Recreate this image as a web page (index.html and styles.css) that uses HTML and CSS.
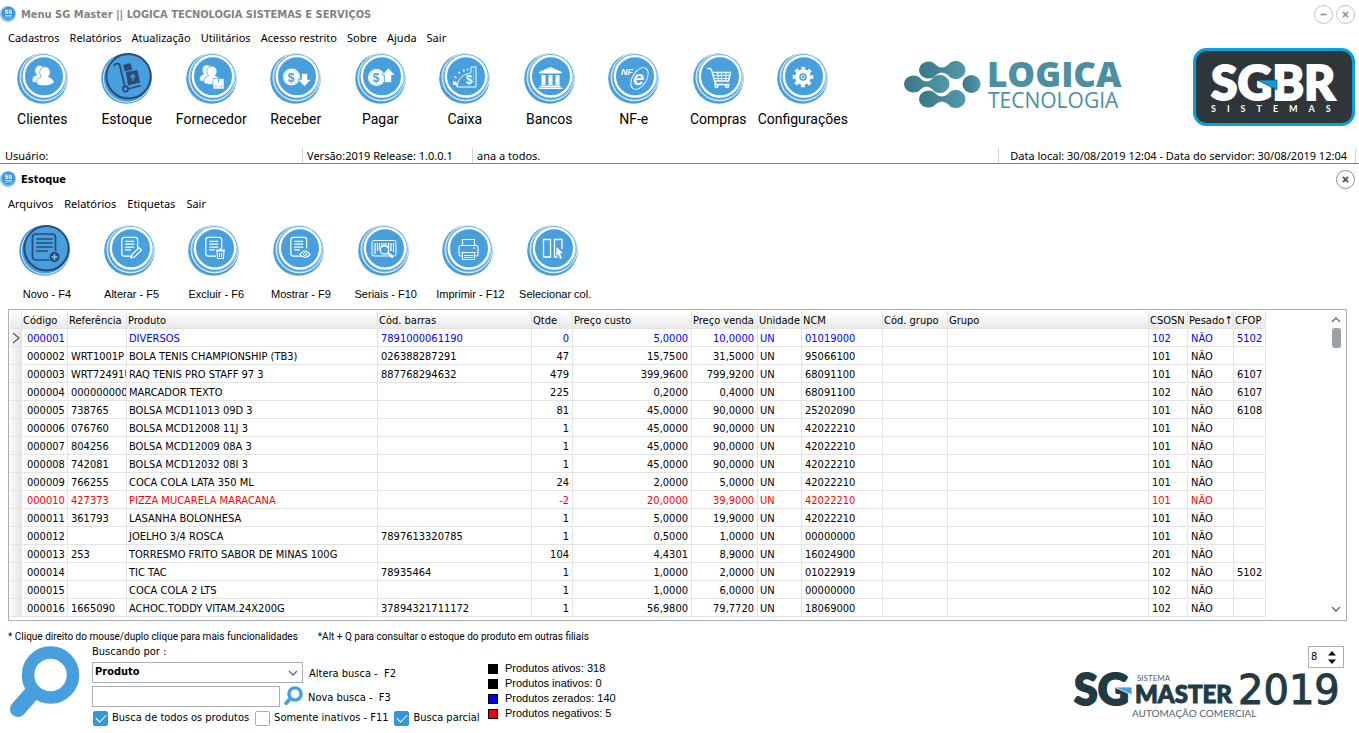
FILE: index.html
```html
<!DOCTYPE html>
<html lang="pt-BR">
<head>
<meta charset="utf-8">
<title>Menu SG Master</title>
<link rel="stylesheet" href="styles.css">
</head>
<body>
<svg class="defs" aria-hidden="true">
  <symbol id="disc" viewBox="0 0 51 51">
    <circle cx="25.5" cy="25.5" r="25.3" fill="#47a0dd"/>
    <circle cx="26.6" cy="24.2" r="23.6" fill="none" stroke="#fff" stroke-width=".9"/>
    <circle cx="26.3" cy="24.6" r="22.4" fill="none" stroke="#fff" stroke-width=".5"/>
    <circle cx="27" cy="23.3" r="20.2" fill="none" stroke="#fff" stroke-width="2.4"/>
  </symbol>
  <symbol id="disc-on" viewBox="0 0 51 51">
    <circle cx="25.5" cy="25.5" r="25.3" fill="#47a0dd"/>
    <circle cx="26" cy="25.5" r="23.6" fill="none" stroke="#fff" stroke-width=".8"/>
    <circle cx="27.5" cy="23.3" r="22.2" fill="#47a0dd" stroke="#2b4b77" stroke-width="2"/>
  </symbol>
  <symbol id="app" viewBox="0 0 16 16">
    <circle cx="8" cy="8" r="8" fill="#8cc6ee"/><circle cx="8.4" cy="7.4" r="6.6" fill="#3b97dc"/>
    <path d="M5 9.5h7M5 11h7" stroke="#a8d3f2"/><path d="M7.600 4H5.500v1.700h2v1.700H5.200M11.500 4.200H9.300v3h2.200V5.800h-1" fill="none" stroke="#fff"/>
  </symbol>
  <symbol id="people" viewBox="0 0 24 22">
    <g fill="#fff" stroke="#47a0dd" stroke-width=".8">
      <path d="M1 15.500c0-3.500 2-4.500 4.500-5.500a5 5.500 0 1 1 6.500 0l3 7.500H3q-2 0-2-2z"/>
      <path d="M5.500 19c0-4.500 2-6 5-7.300a5.300 5.800 0 1 1 7 0c3 1.300 5.500 2.800 5.500 6-4 3.800-13.500 4-17.500 1.300z"/>
    </g>
  </symbol>
  <symbol id="doc" viewBox="0 0 24 24">
    <path d="M15 21H6.500Q4 21 4 18.500V4Q4 1.500 6.500 1.500H18Q20.500 1.500 20.500 4V13M7.500 5.500h9.500M7.500 8.500h9.500M7.500 11.500h9.500M7.500 14.500h6"/>
  </symbol>
</svg>

<section class="window main-window">
  <header class="titlebar muted">
    <svg class="app-icon"><use href="#app"/></svg>
    <h1>Menu SG Master || LOGICA TECNOLOGIA SISTEMAS E SERVIÇOS</h1>
    <button class="round" aria-label="Minimizar"><svg viewBox="0 0 20 20"><path d="M6.500 10h7"/></svg></button>
    <button class="round" aria-label="Fechar"><svg viewBox="0 0 20 20"><path d="M7 7l6 6M13 7l-6 6"/></svg></button>
  </header>
  <nav class="menu">
    <a href="#">Cadastros</a><a href="#">Relatórios</a><a href="#">Atualização</a><a href="#">Utilitários</a><a href="#">Acesso restrito</a><a href="#">Sobre</a><a href="#">Ajuda</a><a href="#">Sair</a>
  </nav>
  <div class="top">
    <div class="tools tools-main">
      <button><svg class="ico" viewBox="0 0 51 51"><use href="#disc"/><use href="#people" x="14" y="11.500" width="24" height="23"/></svg><span>Clientes</span></button>
      <button><svg class="ico" viewBox="0 0 51 51"><use href="#disc-on"/><g fill="none" stroke="#2b4b77" stroke-width="1.700" stroke-linecap="round"><path d="M13 12.500c1-2 4.500-2.500 5.500-1l5.200 21.500M27 36l12-3.300"/><circle cx="24.500" cy="36" r="2.600"/></g><path d="M22 12l7.500-2 1.800 6.500-7.500 2zM25 19l11.500-2 2.500 12.500-12 3z" fill="#2b4b77"/><path d="M31.800 28v-6m-2.500 2.500l2.500-2.800 2.500 2.800" fill="none" stroke="#47a0dd" stroke-width="1.300"/></svg><span>Estoque</span></button>
      <button><svg class="ico" viewBox="0 0 51 51"><use href="#disc"/><use href="#people" x="12.500" y="11" width="23" height="22"/><path d="M27 25.500h11V36H27z" fill="#fff" stroke="#47a0dd" stroke-width=".6"/><path d="M32.500 26v3.500M30 32.500v1.500M35 32.500v1.500" stroke="#47a0dd"/></svg><span>Fornecedor</span></button>
      <button><svg class="ico" viewBox="0 0 51 51"><use href="#disc"/><circle cx="21.500" cy="24" r="8.500" fill="#fff"/><circle cx="21.500" cy="24" r="7" fill="none" stroke="#b9dcf4" stroke-width=".7"/><text x="21" y="28.500" class="coin">$</text><path d="M31.500 20.500h6v6h3.500l-6.500 7-6.500-7h3.500z" fill="#fff" stroke="#47a0dd" stroke-width=".6"/></svg><span>Receber</span></button>
      <button><svg class="ico" viewBox="0 0 51 51"><use href="#disc"/><circle cx="21.500" cy="24.500" r="8.500" fill="#fff"/><circle cx="21.500" cy="24.500" r="7" fill="none" stroke="#b9dcf4" stroke-width=".7"/><text x="21" y="29" class="coin">$</text><path d="M29.500 29.500h7v-7.500h3.500l-6.500-7-6.500 7h2.500z" fill="#fff" stroke="#47a0dd" stroke-width=".6"/></svg><span>Pagar</span></button>
      <button><svg class="ico" viewBox="0 0 51 51"><use href="#disc"/><path d="M18 34h19V14h-5v5.500M18 34c.5-8 6-13 14-14M18 34v-3" fill="none" stroke="#fff"/><path d="M34.500 16v14" stroke="#fff" stroke-width=".6" stroke-dasharray="1 1"/><path d="M14 28l3.500 1v3H14z" fill="#fff"/><path d="M15.500 23.500l2 1.500M19.500 19l1.500 1.500M24.500 16.500l.7 2M28.500 15.500v2" stroke="#fff" stroke-width="1.500" fill="none"/><text x="30" y="30.500" class="coin white">$</text></svg><span>Caixa</span></button>
      <button><svg class="ico" viewBox="0 0 51 51"><use href="#disc"/><path d="M26.500 14l11.500 5v1.500H15V19zM17.500 22h4v10h-4zM24.500 22h4v10h-4zM31.500 22h4v10h-4zM16.500 32.500h20V34h-20zM14.500 34.500h24V36h-24z" fill="#fff"/></svg><span>Bancos</span></button>
      <button><svg class="ico" viewBox="0 0 51 51"><use href="#disc"/><text x="13" y="22" class="nf">NF</text><ellipse cx="31.500" cy="25.500" rx="7" ry="12" transform="rotate(32 31.500 25.500)" fill="none" stroke="#fff" stroke-width=".9"/><text x="25" y="32" class="nfe">e</text></svg><span>NF-e</span></button>
      <button><svg class="ico" viewBox="0 0 51 51"><use href="#disc"/><g fill="none" stroke="#fff" stroke-width="1.500"><path d="M14.500 15.500h3l1.500 3 3.500 13h13.500M20 19.500h17.500l-2 8.500H22.500" stroke-linecap="round"/><path d="M20.500 22.500h16M21.500 25.500h14M24.500 20l1 8M28.500 20v8M33 20l-.5 8" stroke-width="1.100"/><circle cx="23.500" cy="33" r="1.500"/><circle cx="34" cy="33" r="1.500"/></g></svg><span>Compras</span></button>
      <button><svg class="ico" viewBox="0 0 51 51"><use href="#disc"/><circle cx="26" cy="24" r="8.600" fill="none" stroke="#fff" stroke-width="3.500" stroke-dasharray="3.600 3.150" stroke-dashoffset="1.800"/><circle cx="26" cy="24" r="5.800" fill="none" stroke="#fff" stroke-width="4"/><circle cx="26" cy="24" r="1.800" fill="none" stroke="#fff"/></svg><span>Configurações</span></button>
    </div>
    <svg class="logo-logica" viewBox="0 0 220 54" role="img" aria-label="Logica Tecnologia">
      <defs><linearGradient id="teal"><stop offset="0" stop-color="#3d7686"/><stop offset="1" stop-color="#5099ab"/></linearGradient></defs>
      <g fill="url(#teal)">
        <path d="M16 11a9.500 9 0 0 1 17-5q5.500 5 12 0a9.500 9 0 1 1 0 10q-6.500-5-12 0a9.500 9 0 0 1-17-5z"/>
        <path d="M1 25a9.500 9 0 0 1 17-5q5.500 5 11 0a9.500 9 0 1 1 0 10q-5.500-5-11 0a9.500 9 0 0 1-17-5z"/>
        <path d="M16 40a9.500 9 0 0 1 17-5q5.500 5 12 0a9.500 9 0 1 1 0 10q-6.500-5-12 0a9.500 9 0 0 1-17-5z"/>
        <circle cx="68.500" cy="25" r="9"/>
      </g>
      <text x="84" y="28" class="lg1">LOGICA</text>
      <text x="85" y="49" class="lg2">TECNOLOGIA</text>
    </svg>
    <svg class="logo-sgbr" viewBox="0 0 162 78" role="img" aria-label="SGBR Sistemas">
      <rect x="1.500" y="1.500" width="159" height="75" rx="12" fill="#2e363a" stroke="#069fe2" stroke-width="3"/>
      <text x="18" y="52" class="sb1">SGBR</text>
      <path d="M64 32h20v10z" fill="#069fe2" stroke="#2e363a" stroke-width=".6"/>
      <text x="18" y="64" class="sb2">SISTEMAS</text>
    </svg>
  </div>
  <footer class="status">
    <span>Usuário:</span><span>Versão:2019 Release: 1.0.0.1</span><span>ana a todos.</span><span>Data local: 30/08/2019 12:04 - Data do servidor: 30/08/2019 12:04</span><span></span>
  </footer>
</section>

<section class="window stock">
  <header class="titlebar">
    <svg class="app-icon"><use href="#app"/></svg>
    <h2>Estoque</h2>
    <button class="round" aria-label="Fechar"><svg viewBox="0 0 20 20"><path d="M7 7l6 6M13 7l-6 6"/></svg></button>
  </header>
  <nav class="menu"><a href="#">Arquivos</a><a href="#">Relatórios</a><a href="#">Etiquetas</a><a href="#">Sair</a></nav>
  <div class="tools tools-stock">
    <button><svg class="ico" viewBox="0 0 51 51"><use href="#disc-on"/><g fill="none" stroke="#2b4b77" stroke-width="1.700" stroke-linecap="round"><path d="M31 35H17q-3.500 0-3.500-3.500V12Q13.500 9 17 9h16q3.500 0 3.500 3.500V26M18 14h15M18 18h15M18 22h15M18 26h10"/></g><circle cx="35.500" cy="32" r="5.500" fill="#2b4b77" stroke="#47a0dd"/><path d="M32.500 32h6M35.500 29v6" stroke="#8cc6ee" stroke-width="1.500"/></svg><span>Novo - F4</span></button>
    <button><svg class="ico" viewBox="0 0 51 51"><use href="#disc"/><use class="doc" href="#doc" x="14" y="11" width="23" height="23"/><path d="M27 33l1-3.500 7-7 2.500 2.500-7 7z" fill="#47a0dd" stroke="#fff" stroke-width="1.200"/></svg><span>Alterar - F5</span></button>
    <button><svg class="ico" viewBox="0 0 51 51"><use href="#disc"/><use class="doc" href="#doc" x="14" y="11" width="23" height="23"/><path d="M29 26h7l-.7 7.500h-5.600zM28 25h9M31 24h3M31.500 28v4M33.500 28v4" fill="#47a0dd" stroke="#fff" stroke-width="1.100"/></svg><span>Excluir - F6</span></button>
    <button><svg class="ico" viewBox="0 0 51 51"><use href="#disc"/><use class="doc" href="#doc" x="14" y="11" width="23" height="23"/><path d="M27 29.500q5-7 10 0-5 6-10 0z" fill="#47a0dd" stroke="#fff" stroke-width="1.200"/><circle cx="32" cy="29.300" r="1.600" fill="none" stroke="#fff"/></svg><span>Mostrar - F9</span></button>
    <button><svg class="ico" viewBox="0 0 51 51"><use href="#disc"/><rect x="14" y="15.500" width="24" height="15.500" rx="2" fill="none" stroke="#fff"/><path d="M17 18v11M19.500 18v8M21.500 18v7M24 18v4M26 18v3M28 18v3M30.500 18v5M33 18v8M35.500 18v9" stroke="#fff" stroke-width="1.200"/><circle cx="26.500" cy="25" r="4.200" fill="#47a0dd" stroke="#fff" stroke-width="1.300"/><path d="M30 28l5 4.500" stroke="#fff" stroke-width="2.400"/></svg><span>Seriais - F10</span></button>
    <button><svg class="ico" viewBox="0 0 51 51"><use href="#disc"/><g fill="none" stroke="#fff" stroke-width="1.100"><path d="M20.500 20v-5.500h12V20M20 31h-1.500q-1.500 0-1.500-1.500v-7q0-2 2-2h15q2 0 2 2v7q0 1.500-1.500 1.500H33M19 27.500h15M20.500 27.500v7h12v-7M22 30.500h9M22 32.500h9M31 23h2"/></g></svg><span>Imprimir - F12</span></button>
    <button><svg class="ico" viewBox="0 0 51 51"><use href="#disc"/><path d="M16.500 14.500h7v17.500h-7zM35 24v-9.500h-7.500v17.500h3" fill="none" stroke="#fff" stroke-width="1.300"/><path d="M29.500 22l6.500 6-3 .5 2 4.500-1.800.8-2-4.500-1.900 1.900z" fill="#fff"/></svg><span>Selecionar col.</span></button>
  </div>

  <div class="grid-box">
    <div class="grid-scroll">
    <table>
      <colgroup><col class="c-ind"><col class="c-cod"><col class="c-ref"><col class="c-prod"><col class="c-bar"><col class="c-qtd"><col class="c-cus"><col class="c-ven"><col class="c-uni"><col class="c-ncm"><col class="c-cg"><col class="c-gr"><col class="c-cso"><col class="c-pes"><col class="c-cfop"></colgroup>
      <thead><tr><th></th><th>Código</th><th>Referência</th><th>Produto</th><th>Cód. barras</th><th>Qtde</th><th>Preço custo</th><th>Preço venda</th><th>Unidade</th><th>NCM</th><th>Cód. grupo</th><th>Grupo</th><th>CSOSN</th><th>Pesado↑</th><th>CFOP</th></tr></thead>
      <tbody>
      <tr class="zero"><td><svg class="mark" viewBox="0 0 8 12"><path d="M1 1l6 5-6 5"/></svg></td><td>000001</td><td></td><td>DIVERSOS</td><td>7891000061190</td><td>0</td><td>5,0000</td><td>10,0000</td><td>UN</td><td>01019000</td><td></td><td></td><td>102</td><td>NÃO</td><td>5102</td></tr>
      <tr><td></td><td>000002</td><td>WRT1001P</td><td>BOLA TENIS CHAMPIONSHIP (TB3)</td><td>026388287291</td><td>47</td><td>15,7500</td><td>31,5000</td><td>UN</td><td>95066100</td><td></td><td></td><td>101</td><td>NÃO</td><td></td></tr>
      <tr><td></td><td>000003</td><td>WRT72491U</td><td>RAQ TENIS PRO STAFF 97 3</td><td>887768294632</td><td>479</td><td>399,9600</td><td>799,9200</td><td>UN</td><td>68091100</td><td></td><td></td><td>101</td><td>NÃO</td><td>6107</td></tr>
      <tr><td></td><td>000004</td><td>0000000000</td><td>MARCADOR TEXTO</td><td></td><td>225</td><td>0,2000</td><td>0,4000</td><td>UN</td><td>68091100</td><td></td><td></td><td>102</td><td>NÃO</td><td>6107</td></tr>
      <tr><td></td><td>000005</td><td>738765</td><td>BOLSA MCD11013 09D 3</td><td></td><td>81</td><td>45,0000</td><td>90,0000</td><td>UN</td><td>25202090</td><td></td><td></td><td>101</td><td>NÃO</td><td>6108</td></tr>
      <tr><td></td><td>000006</td><td>076760</td><td>BOLSA MCD12008 11J 3</td><td></td><td>1</td><td>45,0000</td><td>90,0000</td><td>UN</td><td>42022210</td><td></td><td></td><td>101</td><td>NÃO</td><td></td></tr>
      <tr><td></td><td>000007</td><td>804256</td><td>BOLSA MCD12009 08A 3</td><td></td><td>1</td><td>45,0000</td><td>90,0000</td><td>UN</td><td>42022210</td><td></td><td></td><td>101</td><td>NÃO</td><td></td></tr>
      <tr><td></td><td>000008</td><td>742081</td><td>BOLSA MCD12032 08I 3</td><td></td><td>1</td><td>45,0000</td><td>90,0000</td><td>UN</td><td>42022210</td><td></td><td></td><td>101</td><td>NÃO</td><td></td></tr>
      <tr><td></td><td>000009</td><td>766255</td><td>COCA COLA LATA 350 ML</td><td></td><td>24</td><td>2,0000</td><td>5,0000</td><td>UN</td><td>42022210</td><td></td><td></td><td>101</td><td>NÃO</td><td></td></tr>
      <tr class="negative"><td></td><td>000010</td><td>427373</td><td>PIZZA MUCARELA MARACANA</td><td></td><td>-2</td><td>20,0000</td><td>39,9000</td><td>UN</td><td>42022210</td><td></td><td></td><td>101</td><td>NÃO</td><td></td></tr>
      <tr><td></td><td>000011</td><td>361793</td><td>LASANHA BOLONHESA</td><td></td><td>1</td><td>5,0000</td><td>19,9000</td><td>UN</td><td>42022210</td><td></td><td></td><td>101</td><td>NÃO</td><td></td></tr>
      <tr><td></td><td>000012</td><td></td><td>JOELHO 3/4 ROSCA</td><td>7897613320785</td><td>1</td><td>0,5000</td><td>1,0000</td><td>UN</td><td>00000000</td><td></td><td></td><td>101</td><td>NÃO</td><td></td></tr>
      <tr><td></td><td>000013</td><td>253</td><td>TORRESMO FRITO SABOR DE MINAS 100G</td><td></td><td>104</td><td>4,4301</td><td>8,9000</td><td>UN</td><td>16024900</td><td></td><td></td><td>201</td><td>NÃO</td><td></td></tr>
      <tr><td></td><td>000014</td><td></td><td>TIC TAC</td><td>78935464</td><td>1</td><td>1,0000</td><td>2,0000</td><td>UN</td><td>01022919</td><td></td><td></td><td>102</td><td>NÃO</td><td>5102</td></tr>
      <tr><td></td><td>000015</td><td></td><td>COCA COLA 2 LTS</td><td></td><td>1</td><td>1,0000</td><td>6,0000</td><td>UN</td><td>00000000</td><td></td><td></td><td>102</td><td>NÃO</td><td></td></tr>
      <tr><td></td><td>000016</td><td>1665090</td><td>ACHOC.TODDY VITAM.24X200G</td><td>37894321711172</td><td>1</td><td>56,9800</td><td>79,7720</td><td>UN</td><td>18069000</td><td></td><td></td><td>102</td><td>NÃO</td><td></td></tr>
      </tbody>
    </table>
    </div>
    <div class="scrollbar">
      <button aria-label="Subir"><svg viewBox="0 0 10 6"><path d="M1 5l4-4 4 4"/></svg></button>
      <i class="thumb"></i>
      <button class="down" aria-label="Descer"><svg viewBox="0 0 10 6"><path d="M1 1l4 4 4-4"/></svg></button>
    </div>
  </div>

  <p class="hints"><span>* Clique direito do mouse/duplo clique para mais funcionalidades</span><span>*Alt + Q para consultar o estoque do produto em outras filiais</span></p>

  <footer class="bottom">
    <svg class="magnifier" viewBox="0 0 70 73"><path d="M23 46L8 63" stroke="#47a0dd" stroke-width="16" stroke-linecap="round"/><circle cx="40.500" cy="29" r="22.500" fill="#fff" stroke="#47a0dd" stroke-width="12.500"/></svg>
    <form class="search">
      <label class="by" for="field">Buscando por :</label>
      <div class="line">
        <div class="combo"><select id="field"><option>Produto</option></select><svg viewBox="0 0 10 6"><path d="M1 1l4 4 4-4"/></svg></div>
        <span>Altera busca -&nbsp; F2</span>
      </div>
      <div class="line">
        <input class="query" type="text" aria-label="Texto da busca">
        <button class="go" type="button" aria-label="Buscar"><svg viewBox="0 0 70 73"><path d="M23 46L8 63" stroke="#47a0dd" stroke-width="14" stroke-linecap="round"/><circle cx="40.500" cy="29" r="22.500" fill="#fff" stroke="#47a0dd" stroke-width="12.500"/></svg></button>
        <span>Nova busca -&nbsp; F3</span>
      </div>
      <div class="checks">
        <label><input type="checkbox" checked>Busca de todos os produtos</label>
        <label><input type="checkbox">Somente inativos - F11</label>
        <label><input type="checkbox" checked>Busca parcial</label>
      </div>
    </form>
    <ul class="legend">
      <li><i class="k"></i>Produtos ativos: 318</li>
      <li><i class="k"></i>Produtos inativos: 0</li>
      <li><i class="b"></i>Produtos zerados: 140</li>
      <li><i class="r"></i>Produtos negativos: 5</li>
    </ul>
    <div class="corner">
      <div class="spin"><input type="text" value="8" aria-label="Tamanho da fonte"><div><button aria-label="Aumentar"><svg viewBox="0 0 8 5"><path d="M4 0l4 4.500H0z"/></svg></button><button aria-label="Diminuir"><svg viewBox="0 0 8 5"><path d="M0 .5h8L4 5z"/></svg></button></div></div>
      <svg class="logo-master" viewBox="0 0 274 54" role="img" aria-label="SG Master 2019">
        <text x="2" y="36" class="m1">SG</text>
        <path d="M42 18h18v8z" fill="#47a0dd" stroke="#fff" stroke-width=".8"/>
        <text x="65" y="12" class="m2">SISTEMA</text>
        <text x="63" y="34" class="m3">MASTER</text>
        <text x="60" y="48" class="m4">AUTOMAÇÃO COMERCIAL</text>
        <text x="166" y="35" class="m5">2019</text>
      </svg>
    </div>
  </footer>
</section>
</body>
</html>
```
FILE: styles.css
```css
* { box-sizing: border-box; }
body { margin: 0; background: #fff; color: #000; font: 11px/14px "DejaVu Sans Condensed", "Noto Sans", sans-serif; }
button { background: none; border: 0; padding: 0; margin: 0; font: inherit; color: inherit; }
a { color: inherit; text-decoration: none; }
.defs { position: absolute; width: 0; height: 0; }

.titlebar { display: flex; align-items: center; gap: 3px; height: 28px; padding-right: 4px; }
.titlebar h1, .titlebar h2 { flex: 1; margin: 2px 0 0 2px; font: bold 11px/14px "DejaVu Sans Condensed", sans-serif; }
.app-icon { width: 16px; height: 16px; }
.round { width: 19px; height: 19px; border: 1px solid #8d9398; border-radius: 50%; display: grid; }
.round svg { width: 17px; height: 17px; fill: none; stroke: #4d5358; stroke-width: 2; }
.muted { color: #828282; }
.muted .round { border-color: #c3c3c3; }
.muted .round svg { stroke: #999; }

.menu { display: flex; gap: 10px; padding: 0 8px; height: 20px; align-items: center; font: 11px/16px "Noto Sans", sans-serif; }
.stock .menu { gap: 11px; }

.top { display: flex; height: 100px; }
.tools { display: grid; }
.tools button { display: flex; flex-direction: column; align-items: center; white-space: nowrap; }
.ico { width: 51px; height: 51px; flex: none; }
.tools-main { grid-template-columns: repeat(10, minmax(0, 1fr)); width: 845px; margin-right: 58px; padding-top: 5px; font: 14px/20px Roboto, sans-serif; flex: none; }
.tools-main button { gap: 5px; }
.coin { font: bold 12px "Liberation Sans", sans-serif; text-anchor: middle; fill: #47a0dd; }
.white { fill: #fff; }
.doc { fill: none; stroke: #fff; stroke-width: 1.3; }
.nf { font: italic bold 9px "Liberation Sans", sans-serif; fill: #fff; }
.nfe { font: italic bold 20px "Liberation Sans", sans-serif; fill: #fff; }
.logo-logica { width: 220px; height: 54px; margin-top: 11px; flex: none; overflow: visible; }
.lg1 { font: 800 35px "Open Sans", sans-serif; fill: #4b8fa1; }
.lg2 { font: 21px "Open Sans", sans-serif; fill: #4b8fa1; }
.logo-sgbr { width: 162px; height: 78px; margin: 0 4px 0 auto; flex: none; }
.sb1 { font: 900 48px Lato, sans-serif; fill: #fff; stroke: #fff; stroke-width: 2; }
.sb2 { font: bold 9px Lato, sans-serif; fill: #fff; letter-spacing: 11px; }

.status { display: grid; grid-template-columns: 302px 170px 1fr 357px 4px; height: 16px; border-bottom: 1px solid #3b8fcd; font: 11px/15px "Noto Sans", sans-serif; white-space: nowrap; }
.status span { border-left: 1px solid #d4d4d4; padding-left: 4px; }
.status span:first-child { border: 0; padding-left: 5px; }
.status span:nth-child(4) { text-align: right; padding-right: 8px; }

.stock .titlebar { height: 30px; }
.tools-stock { grid-template-columns: repeat(7, 1fr); width: 593px; margin-left: 2px; padding-top: 11px; font: 11px/14px "Liberation Sans", sans-serif; }
.tools-stock button { gap: 11px; }
.tools-stock span { padding-left: 5px; }

.grid-box { display: flex; margin: 8px 12px 0 8px; border: 1px solid #a8afb5; padding: 1px 1px 3px; }
.grid-scroll { flex: 1; min-width: 0; overflow: hidden; }
table { border-collapse: separate; border-spacing: 0; table-layout: fixed; width: 1256px; }
.c-ind { width: 12px; } .c-cod { width: 46px; } .c-ref { width: 59px; } .c-prod { width: 251px; }
.c-bar { width: 154px; } .c-qtd { width: 41px; } .c-cus { width: 119px; } .c-ven { width: 66px; }
.c-uni { width: 44px; } .c-ncm { width: 81px; } .c-cg { width: 65px; } .c-gr { width: 201px; }
.c-cso { width: 39px; } .c-pes { width: 46px; } .c-cfop { width: 32px; }
th, td { height: 18px; padding: 2px 0 0 3px; border: solid #e4e4e4; border-width: 0 1px 1px 0; font: 11px/15px "DejaVu Sans Condensed", sans-serif; text-align: left; white-space: nowrap; overflow: hidden; }
th { padding-left: 1px; background: linear-gradient(#fff, #e9e9e9); }
td:first-child { padding: 0 0 0 2px; background: linear-gradient(90deg, #fafafa, #e6e6e6); }
td:nth-child(2) { padding-left: 5px; }
td:nth-child(4), td:nth-child(9) { padding-left: 2px; }
td:nth-child(6), td:nth-child(7), td:nth-child(8) { text-align: right; padding-right: 3px; }
.mark { display: block; width: 8px; height: 12px; fill: none; stroke: #555; stroke-width: 1.2; }
.zero { color: #00f; }
.negative { color: #f00; }
.scrollbar { width: 18px; display: flex; flex-direction: column; align-items: center; }
.scrollbar button { height: 17px; display: grid; place-items: center; }
.scrollbar svg, .combo svg { width: 10px; height: 6px; fill: none; stroke: #666; stroke-width: 1.3; }
.thumb { width: 9px; height: 20px; border-radius: 3px; background: #9aa1a8; }
.down { margin-top: auto; }

.hints { display: flex; gap: 20px; margin: 8px 8px 0; padding-top: 1px; height: 14px; font: 10px/14px Roboto, sans-serif; }
.bottom { display: flex; align-items: flex-start; }
.magnifier { width: 70px; height: 73px; margin: 3px 0 0 10px; fill: none; flex: none; }
.search { margin-left: 12px; width: 396px; }
.by { display: block; height: 17px; line-height: 17px; }
.line { display: flex; align-items: center; height: 24px; }
.line span { margin-left: 6px; padding-top: 3px; }
.combo { position: relative; width: 211px; height: 21px; }
.combo select { width: 100%; height: 21px; appearance: none; background: #fff; border: 1px solid #a8afb5; border-radius: 0; padding: 0 2px; color: #000; font: bold 11px/14px "DejaVu Sans Condensed", sans-serif; }
.combo svg { position: absolute; right: 5px; top: 8px; }
.query { width: 188px; height: 21px; border: 1px solid #a8afb5; padding: 0 3px; font: inherit; }
.go { width: 19px; height: 20px; margin-left: 4px; }
.go svg { display: block; width: 19px; height: 20px; fill: none; }
.line .go + span { margin-left: 5px; }
.checks { display: flex; gap: 5px; height: 20px; align-items: center; white-space: nowrap; }
.checks label { display: flex; align-items: center; gap: 4px; }
.checks input { appearance: none; width: 15px; height: 15px; margin: 0 0 0 1px; border: 1px solid #a8afb5; border-radius: 2px; display: grid; place-items: center; }
.checks input:checked { background: #3397dc; border-color: #3397dc; }
.checks input:checked::after { content: ""; width: 9px; height: 5px; border: solid #fff; border-width: 0 0 1px 1px; transform: translateY(-1px) rotate(-45deg); }
.legend { list-style: none; margin: 18px 0 0; padding: 0; font: 11px/15px "Liberation Sans", sans-serif; }
.legend li { display: flex; gap: 7px; height: 15px; }
.legend i { width: 10px; height: 10px; border: 1px solid #000; margin-top: 3px; }
.k { background: #000; } .b { background: #00f; } .r { background: #f00; }
.corner { margin-left: auto; padding: 3px 13px 0 0; display: flex; flex-direction: column; align-items: flex-end; }
.spin { display: flex; width: 36px; height: 22px; border: 1px solid #a8afb5; margin-right: 2px; }
.spin input { width: 19px; border: 0; padding: 0 0 0 2px; font: inherit; background: none; }
.spin div { display: flex; flex-direction: column; justify-content: center; gap: 3px; }
.spin button { display: grid; }
.spin svg { width: 8px; height: 5px; }
.logo-master { width: 274px; height: 54px; fill: #223b43; margin-top: 1px; }
.m1 { font: 900 43px Lato, sans-serif; stroke: #223b43; stroke-width: 2; }
.m2 { font: 8px Lato, sans-serif; fill: #50646a; }
.m3 { font: 900 24px Lato, sans-serif; stroke: #223b43; }
.m4 { font: 10px Lato, sans-serif; fill: #50646a; }
.m5 { font: 40px "DejaVu Sans", sans-serif; stroke: #223b43; stroke-width: 1; }
```
